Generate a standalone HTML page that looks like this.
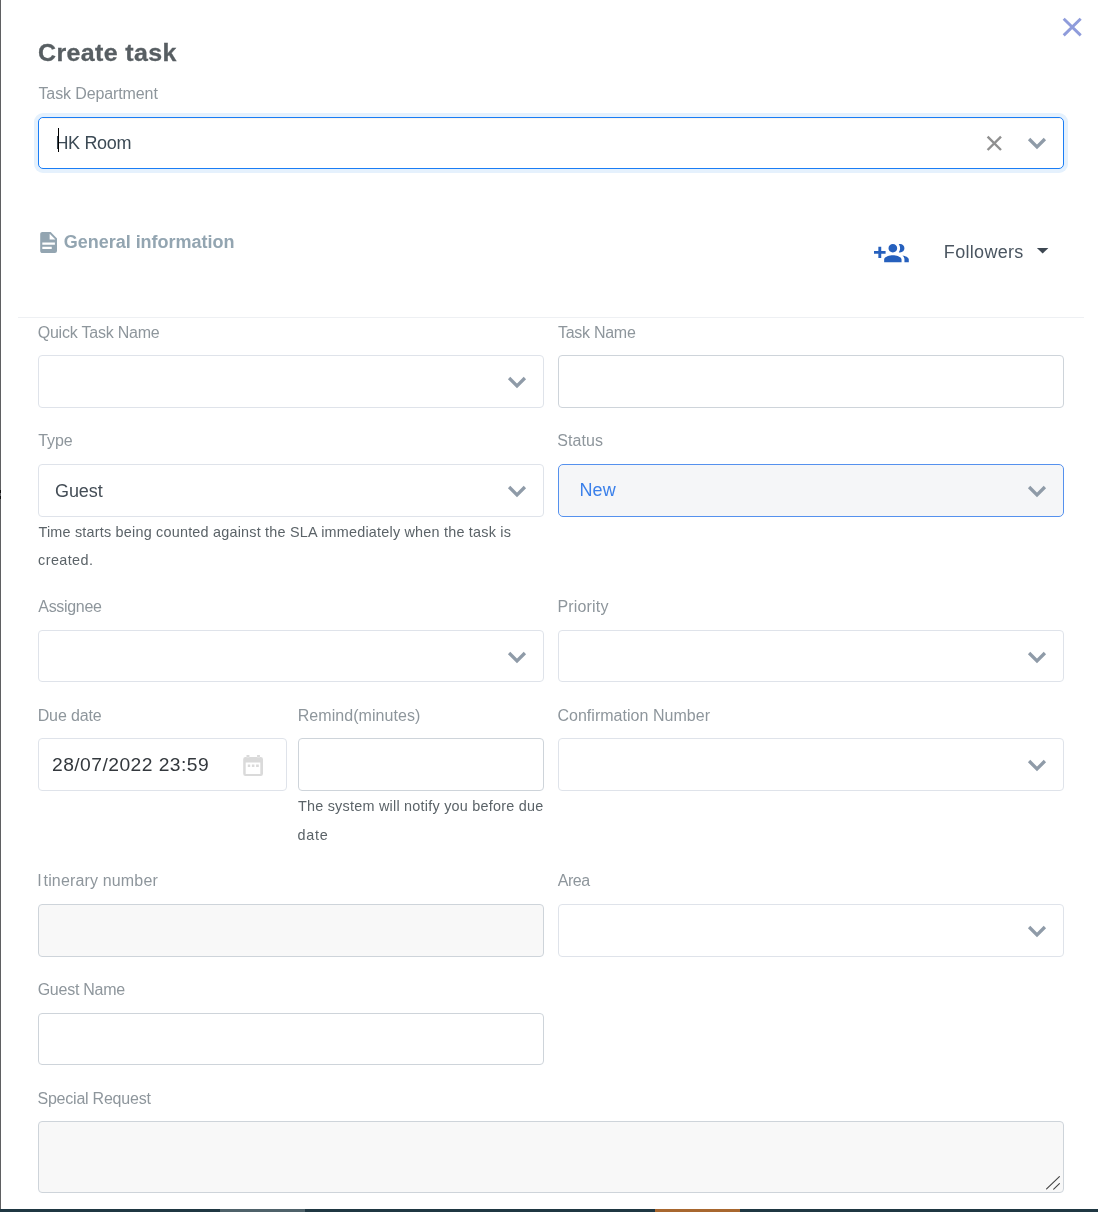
<!DOCTYPE html>
<html lang="en">
<head>
<meta charset="utf-8">
<title>Create task</title>
<style>
html,body{margin:0;padding:0;background:#fff;}
body{width:1098px;height:1212px;position:relative;overflow:hidden;font-family:"Liberation Sans", sans-serif;}
.t{position:absolute;display:block;white-space:nowrap;margin:0;padding:0;font-weight:400;}
.modal{position:absolute;left:0;top:0;width:1098px;height:1212px;will-change:transform;}
.b{position:absolute;box-sizing:border-box;}
.i{position:absolute;display:block;overflow:visible;}
</style>
</head>
<body>
<main class="modal">
<header>
<h3 class="t" style="left:37.50px;top:34.98px;font-size:24px;line-height:36px;color:#575e62;font-weight:700;letter-spacing:0.362px;transform:scaleX(1.04);transform-origin:0 0;-webkit-text-stroke:0.3px #575e62;">Create task</h3>
<label class="t" style="left:38.49px;top:81.86px;font-size:16px;line-height:24px;color:#8e969c;letter-spacing:-0.114px;">Task Department</label>
<div class="select focused">
<div class="b" style="left:38px;top:117px;width:1026px;height:52px;border:1px solid #1a7df5;background:#fff;border-radius:5px;box-shadow:0 0 0 4px #e5f1fd;"></div>
<div class="b" style="left:42px;top:118px;width:1018px;height:1px;background:#fdf5ee"></div>
<div class="t" style="left:55.41px;top:129.86px;font-size:18px;line-height:27px;color:#3c4a55;letter-spacing:-0.331px;">HK Room</div>
<div class="b" style="left:58px;top:128px;width:1px;height:24px;background:#000"></div>
<svg class="i" style="left:984px;top:133px" width="20" height="20" viewBox="0 0 20 20"><path d="M3.6 3.6 L17 17 M17 3.6 L3.6 17" fill="none" stroke="#909090" stroke-width="2.4"/></svg>
<svg class="i" style="left:1024.8px;top:133px" width="24" height="20" viewBox="0 0 24 20"><path d="M4.1 6 L12 13.9 L19.9 6" fill="none" stroke="#8f9ba8" stroke-width="3.3" stroke-linejoin="miter"/></svg>
</div>
<svg class="i" style="left:1060px;top:15px" width="24" height="24" viewBox="0 0 24 24"><path d="M3.7 3.8 L20.7 20.4 M20.7 3.8 L3.7 20.4" fill="none" stroke="#8f9cdb" stroke-width="2.9"/></svg>
</header>
<section class="general">
<svg class="i" style="left:35.7px;top:230px" width="25.2" height="25.2" viewBox="0 0 24 24"><path fill="#93a5b1" d="M13,9H18.500L13,3.500V9M6,2H14L20,8V20A2,2 0 0,1 18,22H6C4.890,22 4,21.100 4,20V4C4,2.890 4.890,2 6,2M15,18V16H6V18H15M18,14V12H6V14H18Z"/></svg>
<h4 class="t" style="left:63.76px;top:228.66px;font-size:18px;line-height:27px;color:#93a5b1;font-weight:700;letter-spacing:-0.019px;">General information</h4>
<svg class="i" style="left:874.1px;top:236.7px" width="34.8" height="33.6" viewBox="0 0 24 24" preserveAspectRatio="none"><path fill="#2660bd" d="M8 10H5V7H3v3H0v2h3v3h2v-3h3v-2zm10 1c1.660 0 2.990-1.340 2.990-3S19.660 5 18 5c-.320 0-.630.050-.910.140.570.810.900 1.790.900 2.860s-.340 2.040-.900 2.860c.280.090.590.140.910.140zm-5 0c1.660 0 2.990-1.340 2.990-3S14.660 5 13 5c-1.660 0-3 1.340-3 3s1.340 3 3 3zm6.620 2.160c.830.730 1.380 1.660 1.380 2.840v2h3v-2c0-1.540-2.370-2.490-4.380-2.840zM13 13c-2 0-6 1-6 3v2h12v-2c0-2-4-3-6-3z"/></svg>
<span class="t" style="left:943.86px;top:238.66px;font-size:18px;line-height:27px;color:#4a5560;letter-spacing:0.305px;">Followers</span>
<svg class="i" style="left:1034px;top:244px" width="18" height="14" viewBox="1034 244 18 14"><path d="M1036.9 247.9 H1048.4 L1042.65 253.4 Z" fill="#3d4752"/></svg>
<div class="b" style="left:18px;top:317px;width:1066px;height:1px;background:#eef0f3"></div>
<form>
<div class="row">
<label class="t" style="left:37.73px;top:320.66px;font-size:16px;line-height:24px;color:#8e969c;letter-spacing:-0.219px;">Quick Task Name</label>
<label class="t" style="left:558.01px;top:320.66px;font-size:16px;line-height:24px;color:#8e969c;letter-spacing:-0.275px;">Task Name</label>
<div class="b" style="left:38px;top:355px;width:506px;height:53px;border:1px solid #dfe3ea;background:#fff;border-radius:4px;"></div>
<svg class="i" style="left:505.1px;top:372px" width="24" height="20" viewBox="0 0 24 20"><path d="M4.1 6 L12 13.9 L19.9 6" fill="none" stroke="#8f9ba8" stroke-width="3.3" stroke-linejoin="miter"/></svg>
<div class="b" style="left:558px;top:355px;width:506px;height:53px;border:1px solid #ced4da;background:#fff;border-radius:4px;"></div>
</div>
<div class="row">
<label class="t" style="left:38.25px;top:428.86px;font-size:16px;line-height:24px;color:#8e969c;letter-spacing:-0.084px;">Type</label>
<label class="t" style="left:557.18px;top:428.86px;font-size:16px;line-height:24px;color:#8e969c;letter-spacing:0.088px;">Status</label>
<div class="b" style="left:38px;top:464px;width:506px;height:53px;border:1px solid #dfe3ea;background:#fff;border-radius:4px;"></div>
<div class="t" style="left:54.97px;top:477.86px;font-size:18px;line-height:27px;color:#444d56;letter-spacing:-0.060px;">Guest</div>
<svg class="i" style="left:505.1px;top:481px" width="24" height="20" viewBox="0 0 24 20"><path d="M4.1 6 L12 13.9 L19.9 6" fill="none" stroke="#8f9ba8" stroke-width="3.3" stroke-linejoin="miter"/></svg>
<div class="b" style="left:558px;top:464px;width:506px;height:53px;border:1px solid #5591ee;background:#f5f6f8;border-radius:5px;"></div>
<div class="t" style="left:579.39px;top:476.86px;font-size:18px;line-height:27px;color:#3b80ea;letter-spacing:0.208px;">New</div>
<svg class="i" style="left:1024.8px;top:481px" width="24" height="20" viewBox="0 0 24 20"><path d="M4.1 6 L12 13.9 L19.9 6" fill="none" stroke="#8f9ba8" stroke-width="3.3" stroke-linejoin="miter"/></svg>
<small class="t" style="left:38.45px;top:521.11px;font-size:14.4px;line-height:22px;color:#5b6368;letter-spacing:0.212px;">Time starts being counted against the SLA immediately when the task is</small>
<small class="t" style="left:38.08px;top:549.11px;font-size:14.4px;line-height:22px;color:#5b6368;letter-spacing:0.410px;">created.</small>
</div>
<div class="row">
<label class="t" style="left:38.27px;top:594.96px;font-size:16px;line-height:24px;color:#8e969c;letter-spacing:-0.306px;">Assignee</label>
<label class="t" style="left:557.47px;top:594.96px;font-size:16px;line-height:24px;color:#8e969c;letter-spacing:0.169px;">Priority</label>
<div class="b" style="left:38px;top:630px;width:506px;height:52px;border:1px solid #dfe3ea;background:#fff;border-radius:4px;"></div>
<svg class="i" style="left:505.1px;top:647px" width="24" height="20" viewBox="0 0 24 20"><path d="M4.1 6 L12 13.9 L19.9 6" fill="none" stroke="#8f9ba8" stroke-width="3.3" stroke-linejoin="miter"/></svg>
<div class="b" style="left:558px;top:630px;width:506px;height:52px;border:1px solid #dfe3ea;background:#fff;border-radius:4px;"></div>
<svg class="i" style="left:1024.8px;top:647px" width="24" height="20" viewBox="0 0 24 20"><path d="M4.1 6 L12 13.9 L19.9 6" fill="none" stroke="#8f9ba8" stroke-width="3.3" stroke-linejoin="miter"/></svg>
</div>
<div class="row">
<label class="t" style="left:37.71px;top:703.96px;font-size:16px;line-height:24px;color:#8e969c;letter-spacing:-0.140px;">Due date</label>
<label class="t" style="left:297.71px;top:703.96px;font-size:16px;line-height:24px;color:#8e969c;letter-spacing:0.059px;">Remind(minutes)</label>
<label class="t" style="left:557.38px;top:703.96px;font-size:16px;line-height:24px;color:#8e969c;letter-spacing:0.030px;">Confirmation Number</label>
<div class="b" style="left:38px;top:738px;width:249px;height:53px;border:1px solid #dfe3ea;background:#fff;border-radius:4px;"></div>
<div class="t" style="left:52.00px;top:751.56px;font-size:18px;line-height:27px;color:#33383d;letter-spacing:0.417px;transform:scaleX(1.07);transform-origin:0 0;">28/07/2022 23:59</div>
<svg class="i" style="left:240px;top:752px" width="26" height="26" viewBox="240 752 26 26"><path fill="#dadada" fill-rule="evenodd" d="M245.4 757.1 H260.8 A2.2 2.2 0 0 1 263 759.3 V773.8 A2.2 2.2 0 0 1 260.8 776 H245.4 A2.2 2.2 0 0 1 243.2 773.8 V759.3 A2.2 2.2 0 0 1 245.4 757.1 Z M245.7 762.5 V773.9 H260.3 V762.5 Z M246.5 754.9 H249.4 V757.2 H246.5 Z M257.1 754.9 H259.9 V757.2 H257.1 Z M247.8 764.4 H250.2 V766.9 H247.8 Z M251.9 764.4 H254.4 V766.9 H251.9 Z M256.1 764.4 H258.8 V766.9 H256.1 Z"/></svg>
<div class="b" style="left:298px;top:738px;width:246px;height:53px;border:1px solid #ced4da;background:#fff;border-radius:4px;"></div>
<div class="b" style="left:558px;top:738px;width:506px;height:53px;border:1px solid #dfe3ea;background:#fff;border-radius:4px;"></div>
<svg class="i" style="left:1024.8px;top:755px" width="24" height="20" viewBox="0 0 24 20"><path d="M4.1 6 L12 13.9 L19.9 6" fill="none" stroke="#8f9ba8" stroke-width="3.3" stroke-linejoin="miter"/></svg>
<small class="t" style="left:297.91px;top:794.91px;font-size:14.4px;line-height:22px;color:#5b6368;letter-spacing:0.240px;">The system will notify you before due</small>
<small class="t" style="left:297.59px;top:823.91px;font-size:14.4px;line-height:22px;color:#5b6368;letter-spacing:0.687px;">date</small>
</div>
<div class="row">
<label class="t" style="left:37.32px;top:869.26px;font-size:16px;line-height:24px;color:#8e969c;letter-spacing:0.156px;"><span style="letter-spacing:1.8px">I</span>tinerary number</label>
<label class="t" style="left:557.70px;top:869.26px;font-size:16px;line-height:24px;color:#8e969c;letter-spacing:-0.433px;">Area</label>
<div class="b" style="left:38px;top:904px;width:506px;height:53px;border:1px solid #ced4da;background:#f8f8f8;border-radius:4px;"></div>
<div class="b" style="left:558px;top:904px;width:506px;height:53px;border:1px solid #dfe3ea;background:#fff;border-radius:4px;"></div>
<svg class="i" style="left:1024.8px;top:921px" width="24" height="20" viewBox="0 0 24 20"><path d="M4.1 6 L12 13.9 L19.9 6" fill="none" stroke="#8f9ba8" stroke-width="3.3" stroke-linejoin="miter"/></svg>
</div>
<div class="row">
<label class="t" style="left:37.67px;top:978.26px;font-size:16px;line-height:24px;color:#8e969c;letter-spacing:-0.253px;">Guest Name</label>
<div class="b" style="left:38px;top:1013px;width:506px;height:52px;border:1px solid #ced4da;background:#fff;border-radius:4px;"></div>
</div>
<div class="row">
<label class="t" style="left:37.49px;top:1086.71px;font-size:16px;line-height:24px;color:#8e969c;letter-spacing:-0.224px;">Special Request</label>
<div class="b" style="left:38px;top:1121px;width:1026px;height:72px;border:1px solid #ced4da;background:#f8f8f8;border-radius:4px;"></div>
<svg class="i" style="left:1044px;top:1174px" width="18" height="18" viewBox="0 0 18 18"><path d="M2.6 14.9 L15.4 2.6 M9.7 15.1 L15.4 9.7" fill="none" stroke="#444" stroke-width="1.15" stroke-linecap="round"/></svg>
</div>
</form>
</section>
</main>
<div class="b" style="left:0;top:0;width:1px;height:1212px;background:#5f6062"></div>
<div class="b" style="left:0;top:490px;width:1px;height:3px;background:#111"></div>
<div class="b" style="left:0;top:496px;width:1px;height:3px;background:#111"></div>
<div class="b" style="left:0;top:1209px;width:1098px;height:3px;background:#1f3742"></div>
<div class="b" style="left:220px;top:1209px;width:85px;height:3px;background:#4f626a"></div>
<div class="b" style="left:655px;top:1209px;width:85px;height:3px;background:#a8672f"></div>
</body>
</html>
